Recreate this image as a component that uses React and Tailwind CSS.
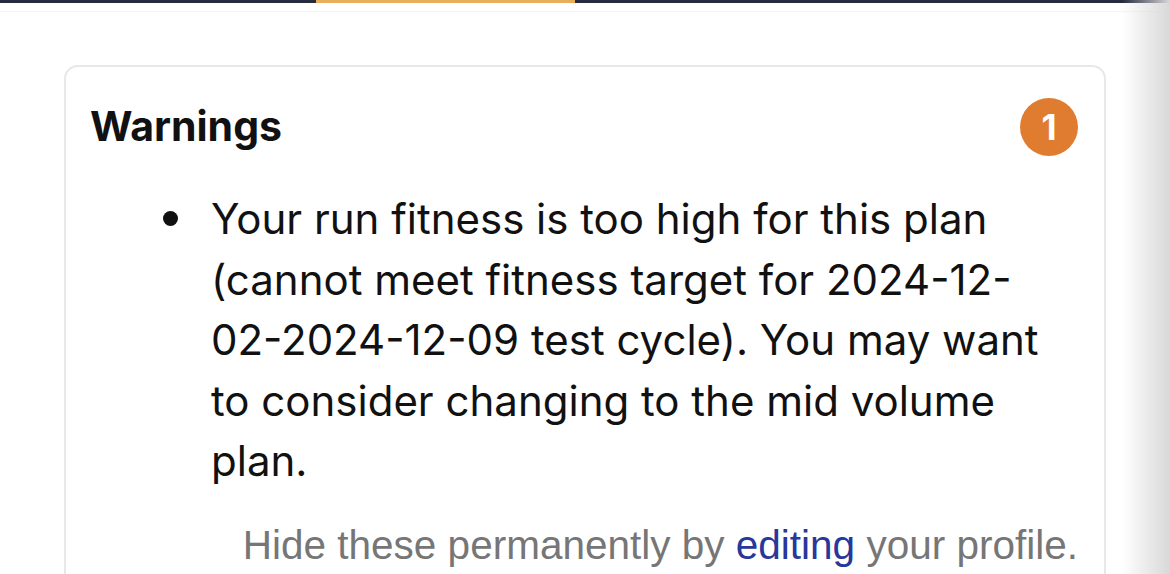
import React from 'react';

const TopBar = () => (
    <div className="flex h-[3px] w-full">
        <div className="w-[316px] bg-[#252a3e]" />
        <div className="w-[259px] bg-[#e9ae5c]" />
        <div className="flex-1 bg-[#252a3e]" />
    </div>
);

const warnings = [
    'Your run fitness is too high for this plan (cannot meet fitness target for 2024-12-02-2024-12-09 test cycle). You may want to consider changing to the mid volume plan.'
];

const App = () => {
    return (
        <div className="relative h-[574px] w-full overflow-hidden bg-white" style={{ fontFamily: 'Inter, "Noto Sans", sans-serif' }}>
            <TopBar />
            <div className="h-[9px] border-b border-[#f5f5f7]" />

            <div className="px-[64px] pt-[53px]">
                <div className="rounded-[14px] border-2 border-[#e8e8e8] px-[26px] pb-[40px]">
                    <div className="flex items-start justify-between pt-[31px]">
                        <h2 className="ml-[-2px] mt-[5px] text-[41px] font-bold leading-[46px] text-[#111]">Warnings</h2>
                        <span className="flex h-[58px] w-[58px] items-center justify-center rounded-full bg-[#e07c30] text-[35px] font-bold text-white">
                            1
                        </span>
                    </div>

                    <ul className="mt-[33px] pl-[71px] pr-[34px] text-[42px] leading-[60.5px] text-[#111]">
                        {warnings.map((w, i) => (
                            <li key={i} className="flex items-start">
                                <span className="mt-[22px] h-[15px] w-[15px] shrink-0 rounded-full bg-[#111]" />
                                <span className="ml-[33px]">{w}</span>
                            </li>
                        ))}
                    </ul>

                    <p
                        className="mt-[30px] text-right text-[40.5px] leading-[47px] text-[#767676]"
                        style={{ fontFamily: '"Liberation Sans", Arial, sans-serif' }}
                    >
                        Hide these permanently by <a className="text-[#28379a]">editing</a> your profile.
                    </p>
                </div>
            </div>

            <div className="pointer-events-none absolute bottom-0 right-0 top-0 w-[48px] bg-gradient-to-r from-transparent to-[#d8d8d8]" />
        </div>
    );
};

export default App;
